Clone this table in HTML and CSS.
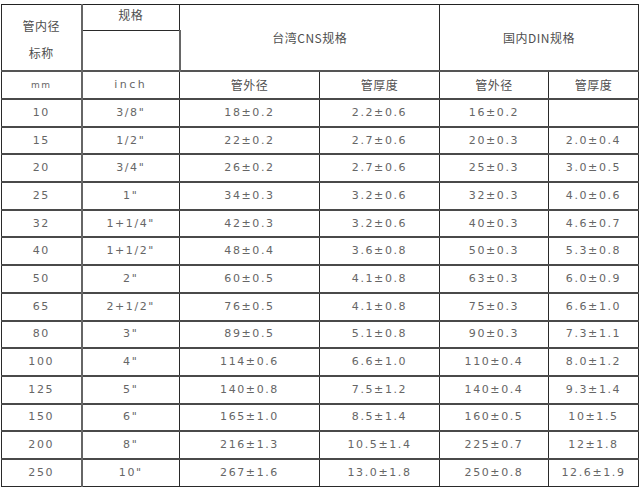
FILE: index.html
```html
<!DOCTYPE html>
<html lang="zh">
<head>
<meta charset="utf-8">
<link rel="stylesheet" href="styles.css">
</head>
<body>
<table class="spec">
  <colgroup>
    <col class="c1"><col class="c2"><col class="c3"><col class="c4"><col class="c5"><col class="c6">
  </colgroup>
  <tr class="h1">
    <td rowspan="2" class="cjk name"><div>管内径</div><div>标称</div></td>
    <td class="cjk gauge">规格</td>
    <td colspan="2" rowspan="2" class="cjk">台湾CNS规格</td>
    <td colspan="2" rowspan="2" class="cjk">国内DIN规格</td>
  </tr>
  <tr class="h2">
    <td class="blank"></td>
  </tr>
  <tr class="h3">
    <td class="unit">mm</td>
    <td class="unit inch">inch</td>
    <td class="cjk">管外径</td>
    <td class="cjk">管厚度</td>
    <td class="cjk">管外径</td>
    <td class="cjk">管厚度</td>
  </tr>
  <tr><td>10</td><td>3/8"</td><td>18±0.2</td><td>2.2±0.6</td><td>16±0.2</td><td></td></tr>
  <tr><td>15</td><td>1/2"</td><td>22±0.2</td><td>2.7±0.6</td><td>20±0.3</td><td>2.0±0.4</td></tr>
  <tr><td>20</td><td>3/4"</td><td>26±0.2</td><td>2.7±0.6</td><td>25±0.3</td><td>3.0±0.5</td></tr>
  <tr><td>25</td><td>1"</td><td>34±0.3</td><td>3.2±0.6</td><td>32±0.3</td><td>4.0±0.6</td></tr>
  <tr><td>32</td><td>1+1/4"</td><td>42±0.3</td><td>3.2±0.6</td><td>40±0.3</td><td>4.6±0.7</td></tr>
  <tr><td>40</td><td>1+1/2"</td><td>48±0.4</td><td>3.6±0.8</td><td>50±0.3</td><td>5.3±0.8</td></tr>
  <tr><td>50</td><td>2"</td><td>60±0.5</td><td>4.1±0.8</td><td>63±0.3</td><td>6.0±0.9</td></tr>
  <tr><td>65</td><td>2+1/2"</td><td>76±0.5</td><td>4.1±0.8</td><td>75±0.3</td><td>6.6±1.0</td></tr>
  <tr><td>80</td><td>3"</td><td>89±0.5</td><td>5.1±0.8</td><td>90±0.3</td><td>7.3±1.1</td></tr>
  <tr><td>100</td><td>4"</td><td>114±0.6</td><td>6.6±1.0</td><td>110±0.4</td><td>8.0±1.2</td></tr>
  <tr><td>125</td><td>5"</td><td>140±0.8</td><td>7.5±1.2</td><td>140±0.4</td><td>9.3±1.4</td></tr>
  <tr><td>150</td><td>6"</td><td>165±1.0</td><td>8.5±1.4</td><td>160±0.5</td><td>10±1.5</td></tr>
  <tr><td>200</td><td>8"</td><td>216±1.3</td><td>10.5±1.4</td><td>225±0.7</td><td>12±1.8</td></tr>
  <tr><td>250</td><td>10"</td><td>267±1.6</td><td>13.0±1.8</td><td>250±0.8</td><td>12.6±1.9</td></tr>
</table>
</body>
</html>
```
FILE: styles.css
```css
html, body {
  margin: 0;
  padding: 0;
  background: #ffffff;
}
body {
  padding: 4px 0 0 1px;
}
.spec {
  border-collapse: collapse;
  table-layout: fixed;
  width: 638px;
  font-family: "DejaVu Sans", "Noto Sans CJK SC", sans-serif;
  font-size: 11px;
  color: #666666;
  letter-spacing: 1.6px;
}
.c1 { width: 80px; }
.c2 { width: 98px; }
.c3 { width: 140px; }
.c4 { width: 120px; }
.c5 { width: 109px; }
.c6 { width: 90px; }
.spec td {
  border: 1px solid #2a2a2a;
  border-top: 2px solid #4a4a4a;
  text-align: center;
  vertical-align: middle;
  padding: 0;
  height: 25.7px;
  line-height: 14px;
}
.spec tr td:first-child {
  border-right: 2px solid #666;
}
.spec .h1 td { height: 23px; border-top: 1px solid #222; }
.spec .h2 td { height: 39px; }
.spec .h3 td { height: 26px; border-top: 2px solid #555; }
.spec .cjk {
  font-family: "Noto Sans CJK SC", sans-serif;
  font-size: 12px;
  letter-spacing: 0.5px;
  color: #4f4f4f;
}
.spec .name {
  line-height: 27px;
  padding-top: 2px;
}
.spec .gauge {
  vertical-align: top;
  padding-top: 2px;
  line-height: 16px;
}
.spec .h2 .blank {
  border-top: 1px solid #d4d4d4;
}
.spec .unit {
  font-size: 9px;
}
.spec .inch {
  letter-spacing: 2.5px;
  font-size: 11px;
}
```
